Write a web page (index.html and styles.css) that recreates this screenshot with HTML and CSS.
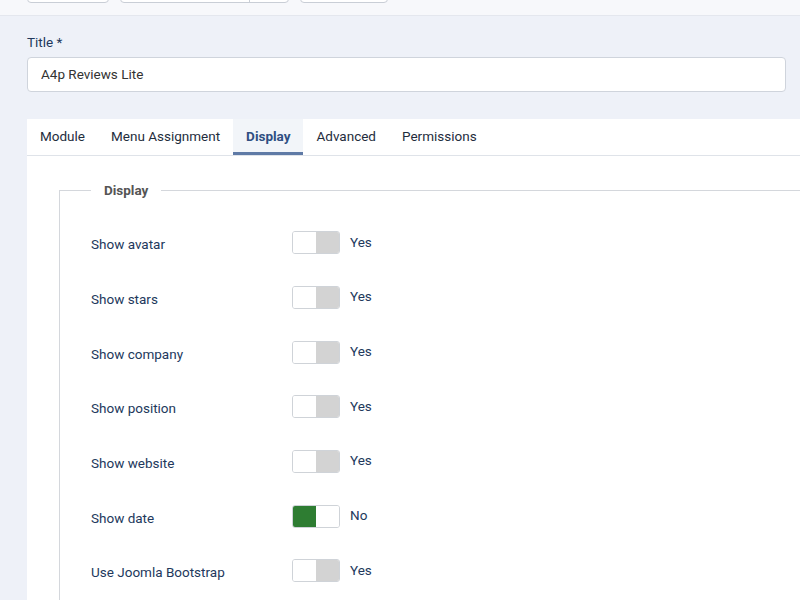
FILE: index.html
```html
<!DOCTYPE html>
<html lang="en">
<head>
    <meta charset="UTF-8">
    <title>Module: A4p Reviews Lite</title>
    <link rel="stylesheet" href="styles.css">
</head>
<body>
    <div class="toolbar">
        <span class="tbtn tbtn-a"></span>
        <span class="tbtn tbtn-b"><span class="tbtn-split"></span></span>
        <span class="tbtn tbtn-c"></span>
    </div>

    <div class="main">
        <label class="title-label" for="title">Title *</label>
        <input type="text" id="title" class="title-input" value="A4p Reviews Lite">

        <div class="card">
            <div class="tabs">
                <div class="tab">Module</div>
                <div class="tab">Menu Assignment</div>
                <div class="tab active">Display</div>
                <div class="tab">Advanced</div>
                <div class="tab">Permissions</div>
            </div>

            <div class="pane">
                <fieldset class="options">
                    <legend>Display</legend>
                    <div class="row">
                        <span class="row-label">Show avatar</span>
                        <span class="switch"><span class="half"></span><span class="half off"></span></span>
                        <span class="state">Yes</span>
                    </div>
                    <div class="row">
                        <span class="row-label">Show stars</span>
                        <span class="switch"><span class="half"></span><span class="half off"></span></span>
                        <span class="state">Yes</span>
                    </div>
                    <div class="row">
                        <span class="row-label">Show company</span>
                        <span class="switch"><span class="half"></span><span class="half off"></span></span>
                        <span class="state">Yes</span>
                    </div>
                    <div class="row">
                        <span class="row-label">Show position</span>
                        <span class="switch"><span class="half"></span><span class="half off"></span></span>
                        <span class="state">Yes</span>
                    </div>
                    <div class="row">
                        <span class="row-label">Show website</span>
                        <span class="switch"><span class="half"></span><span class="half off"></span></span>
                        <span class="state">Yes</span>
                    </div>
                    <div class="row">
                        <span class="row-label">Show date</span>
                        <span class="switch"><span class="half on"></span><span class="half"></span></span>
                        <span class="state">No</span>
                    </div>
                    <div class="row">
                        <span class="row-label">Use Joomla Bootstrap</span>
                        <span class="switch"><span class="half"></span><span class="half off"></span></span>
                        <span class="state">Yes</span>
                    </div>
                </fieldset>
            </div>
        </div>
    </div>
</body>
</html>
```

FILE: styles.css
```css
body {
    margin: 0;
    background: #eef1f8;
    font-family: Roboto, "Liberation Sans", sans-serif;
    font-size: 13.5px;
    color: #22385c;
    overflow: hidden;
}
.toolbar {
    height: 15px;
    background: #f7f8fb;
    border-bottom: 1px solid #e4e7ee;
    display: flex;
    align-items: flex-start;
    gap: 11px;
    padding-left: 27px;
    overflow: hidden;
}
.tbtn {
    display: block;
    height: 30px;
    margin-top: -27px;
    background: #fff;
    border: 1px solid #c9ced6;
    border-radius: 4px;
    box-sizing: border-box;
    position: relative;
}
.tbtn-a { width: 82px; }
.tbtn-b { width: 169px; }
.tbtn-c { width: 88px; }
.tbtn-split {
    position: absolute;
    left: 128px;
    top: 0;
    bottom: 0;
    border-left: 1px solid #c9ced6;
}
.main {
    padding: 16px 14px 0 27px;
}
.title-label {
    display: block;
    line-height: 20px;
    margin-bottom: 5px;
    color: #22385c;
}
.title-input {
    display: block;
    width: 100%;
    height: 35px;
    box-sizing: border-box;
    border: 1px solid #cfd4dc;
    border-radius: 4px;
    padding: 0 13px 2px;
    font-family: inherit;
    font-size: 13.5px;
    color: #333;
    background: #fff;
    margin: 0 0 27px;
}
.card {
    background: #fff;
    margin-right: -20px;
    height: 600px;
}
.tabs {
    display: flex;
    height: 36px;
    border-bottom: 1px solid #dfe3e9;
}
.tab {
    padding: 0 13px;
    line-height: 34px;
    color: #1f2d3d;
}
.tab.active {
    background: #f2f5f9;
    color: #2f4f82;
    font-weight: bold;
    box-shadow: inset 0 -3px 0 #5f7aa6;
}
.pane {
    padding: 24px 0 0 32px;
}
.options {
    margin: 0;
    border: 1px solid #d4d7dc;
    border-right: none;
    padding: 17px 0 0 31px;
}
.options legend {
    margin-left: 0;
    padding: 0 13px;
    font-weight: bold;
    color: #555;
    line-height: 20px;
}
.row {
    display: flex;
    align-items: center;
    height: 54.67px;
}
.row-label {
    width: 201px;
}
.switch {
    display: flex;
    width: 48px;
    height: 23px;
    border: 1px solid #cfd3d8;
    border-radius: 3px;
    box-sizing: border-box;
    overflow: hidden;
    margin-top: -3px;
}
.half {
    flex: 1;
    background: #fff;
}
.half.off {
    background: #d3d3d3;
}
.half.on {
    background: #2e7d32;
}
.state {
    margin-left: 10px;
    margin-top: -5px;
}
```
